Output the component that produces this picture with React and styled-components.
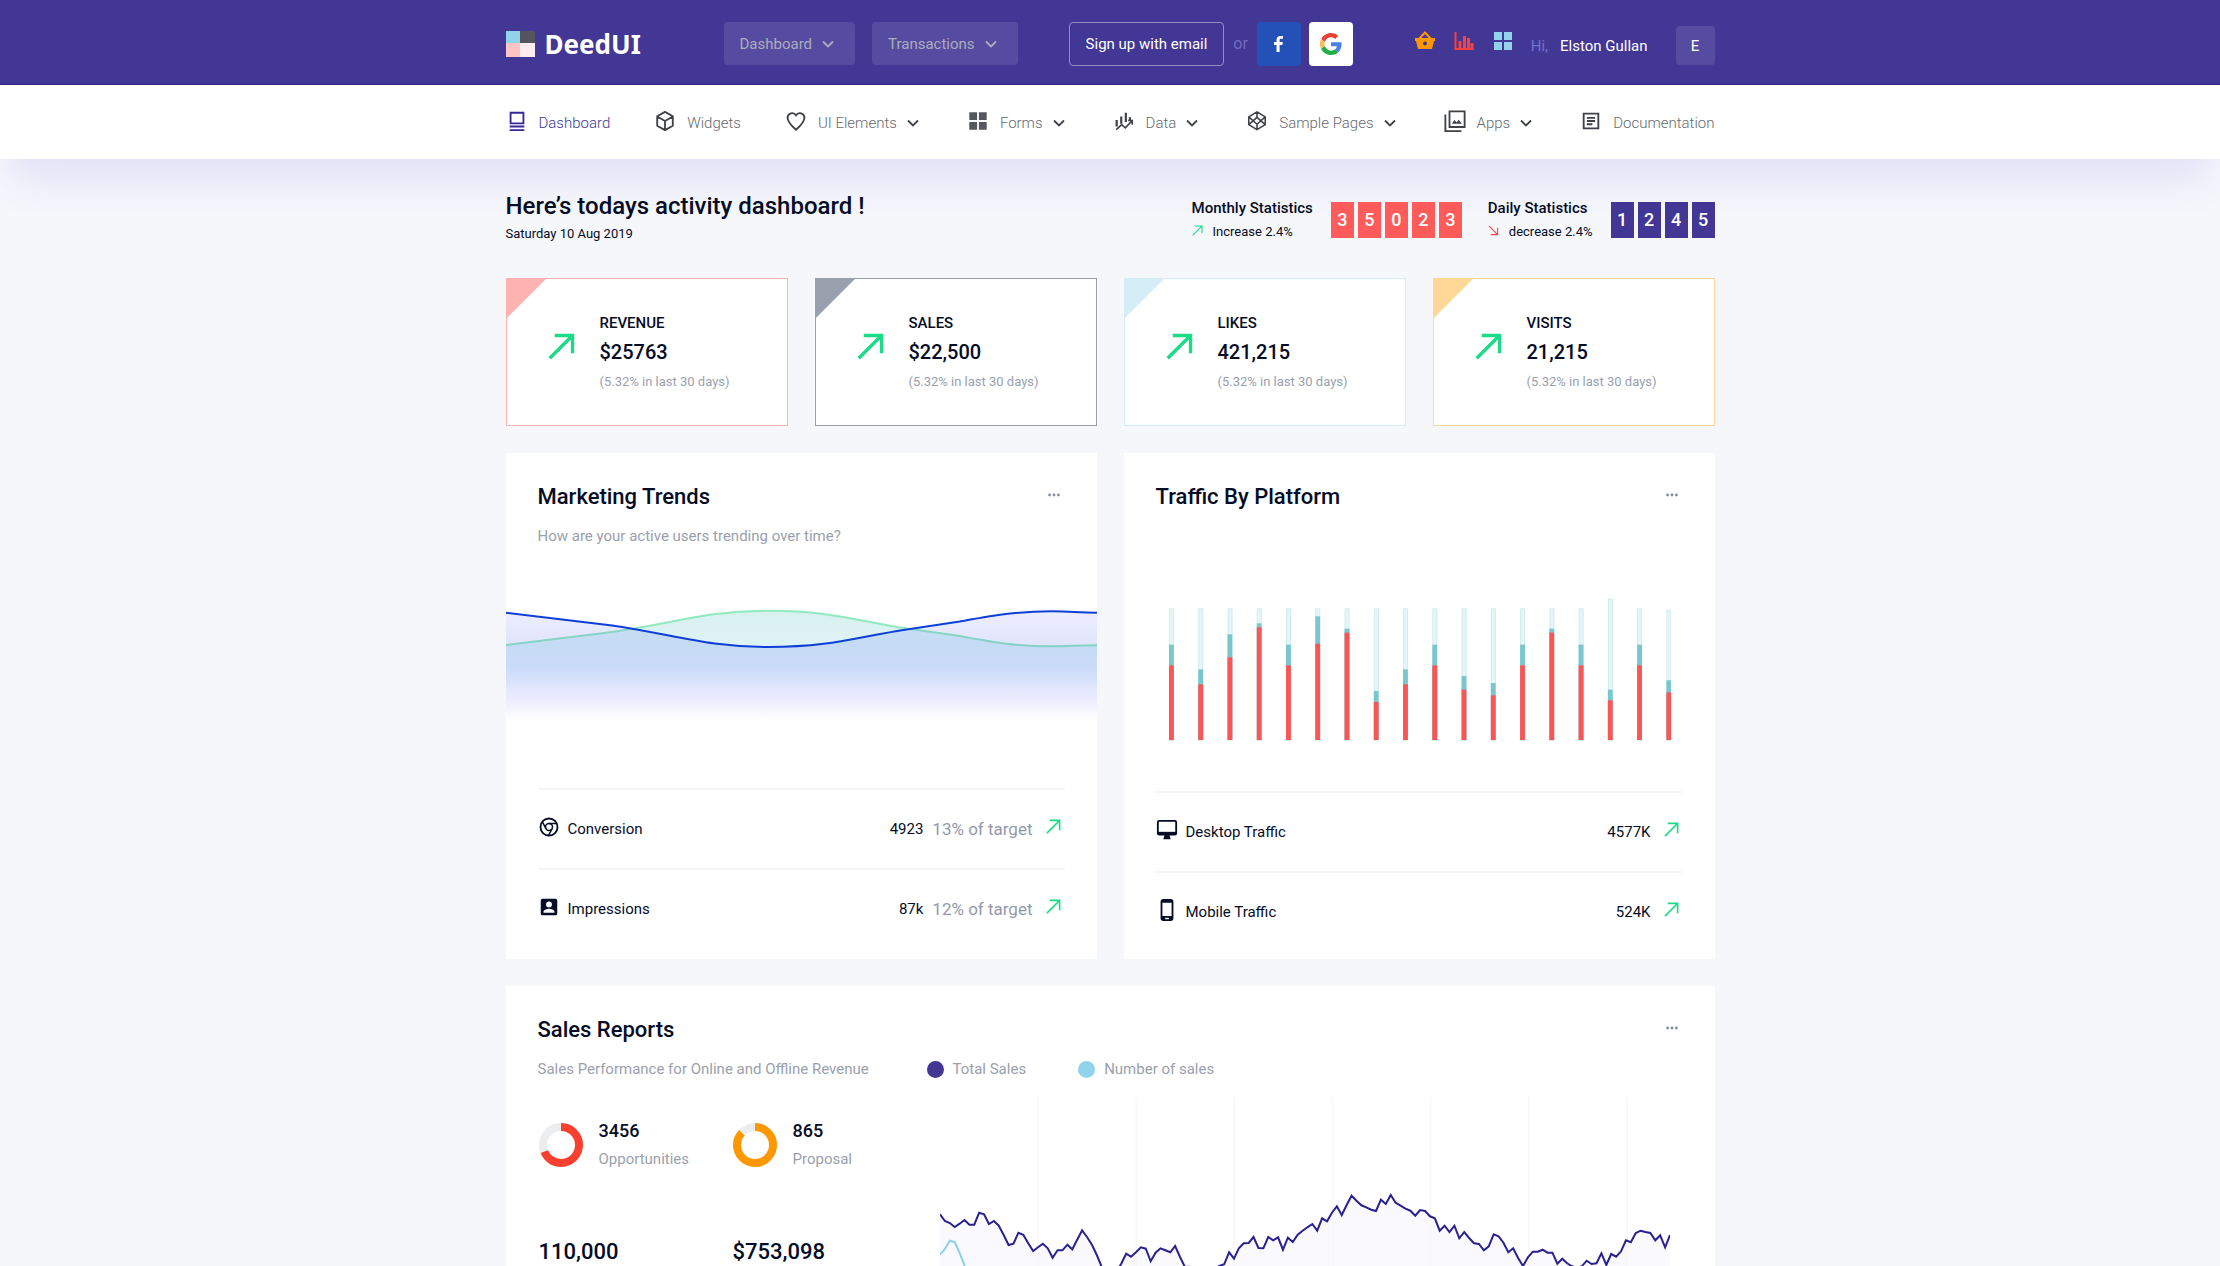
import React from "react";
import styled, { createGlobalStyle } from "styled-components";

const GlobalStyle = createGlobalStyle`
  * { box-sizing: border-box; }
  html { scrollbar-width: none; }
  body {
    margin: 0;
    background: #f6f7fb;
    color: #050c26;
    font-family: Roboto, "Liberation Sans", sans-serif;
    font-size: 15px;
    line-height: 24px;
  }
  h1, h2, p, dl, dd, dt { margin: 0; }
  svg { display: block; flex: none; }
  a { color: inherit; text-decoration: none; }
  button { font: inherit; cursor: pointer; }
`;

const Page = styled.div`
  height: 100vh;
  overflow-y: auto;
  overflow-x: hidden;
  scrollbar-width: none;
`;

const Container = styled.div`
  width: 100%;
  max-width: 1209px;
  margin: 0 auto;
`;

/* ---------- header ---------- */

const Header = styled.header`
  background: #423795;
  border-bottom: 1px solid #2f2387;
`;

const HeaderRow = styled(Container)`
  display: flex;
  align-items: center;
  height: 84px;
  padding-top: 3px;
`;

const Logo = styled.a`
  display: flex;
  align-items: center;
  gap: 10px;
  width: 218px;
  color: #fff;
  font: 700 26px/36px "Noto Sans", sans-serif;
`;

const Group = styled.div`
  display: flex;
  align-items: center;
  gap: ${(p) => p.$gap}px;
  margin-left: ${(p) => p.$push || "0"};
`;

const MenuButton = styled.button`
  display: flex;
  align-items: center;
  gap: 6px;
  height: 43px;
  padding: 0 17px 0 16px;
  border: 0;
  border-radius: 4px;
  background: #554ba0;
  color: #abadbc;
`;

const OutlineButton = styled.button`
  height: 44px;
  padding: 0 16px;
  border: 1px solid #938bc4;
  border-radius: 4px;
  background: transparent;
  color: #fff;
`;

const Or = styled.span`
  padding: 0 9px;
  color: #7269bb;
  font-size: 16px;
`;

const SocialButton = styled.button`
  display: grid;
  place-items: center;
  width: 44px;
  height: 44px;
  margin-right: 8px;
  padding: 0;
  border: 0;
  border-radius: 4px;
  background: ${(p) => p.$bg};
`;

const IconButton = styled.button`
  display: grid;
  place-items: center;
  width: 22px;
  height: 22px;
  margin-bottom: 5px;
  padding: 0;
  border: 0;
  background: none;
`;

const Greeting = styled.p`
  display: flex;
  gap: 12px;
  padding: 4px 11px 0 0;
  color: #fff;
  span { color: #7471cb; }
`;

const Avatar = styled.button`
  width: 39px;
  height: 39px;
  margin-top: 4px;
  padding: 0;
  border: 0;
  border-radius: 4px;
  background: #554ba0;
  color: #fff;
`;

const Nav = styled.nav`
  background: #fff;
  box-shadow: 0 30px 40px -10px rgba(90, 90, 220, 0.14);
`;

const NavList = styled(Container)`
  display: flex;
  justify-content: space-between;
  align-items: center;
  height: 74px;
  padding-top: 2px;
`;

const NavLink = styled.a`
  display: flex;
  align-items: center;
  gap: 11px;
  color: ${(p) => (p.$active ? "#423795" : "#666a70")};
  font-weight: 300;
  > svg { margin-bottom: 5px; }
`;

const NavLabel = styled.span`
  display: flex;
  align-items: center;
  gap: 6px;
`;

/* ---------- heading ---------- */

const Main = styled(Container).attrs({ as: "main" })`
  display: flex;
  flex-direction: column;
  gap: 27px;
  padding: 31px 0 27px;
`;

const Hero = styled.section`
  display: flex;
  justify-content: space-between;
  align-items: flex-end;
  padding-bottom: 5px;
`;

const HeroTitle = styled.h1`
  font-size: 24px;
  line-height: 32px;
  font-weight: 500;
`;

const Statistics = styled(Group)`
  padding-bottom: 2px;
`;

const Small = styled.p`
  font-size: 13px;
`;

const Statistic = styled.div`
  display: flex;
  align-items: center;
  gap: 18px;
`;

const StatisticTitle = styled.p`
  font-weight: 500;
`;

const Change = styled(Small)`
  display: flex;
  gap: 10px;
  svg { margin-top: 5px; }
`;

const Digits = styled.div`
  display: flex;
  gap: 4px;
`;

const Digit = styled.span`
  width: 23px;
  height: 36px;
  background: ${(p) => p.$bg};
  color: #fff;
  font-size: 18px;
  line-height: 36px;
  font-weight: 500;
  text-align: center;
`;

/* ---------- metric cards ---------- */

const Cards = styled.section`
  display: grid;
  grid-template-columns: repeat(4, 1fr);
  gap: 27px;
`;

const Card = styled.article`
  display: flex;
  gap: 25px;
  padding: 30px 20px 29px 41px;
  border: 1px solid ${(p) => p.$tint};
  background: linear-gradient(135deg, ${(p) => p.$tint} 27px, #fff 28px);
  > svg { margin-top: 24px; }
`;

const CardText = styled.div`
  line-height: 29px;
`;

const CardLabel = styled.p`
  font-weight: 500;
`;

const CardValue = styled.p`
  font-size: 20px;
  font-weight: 500;
`;

const CardNote = styled.p`
  font-size: 13px;
  color: #9a9fb0;
`;

/* ---------- panels ---------- */

const Panels = styled.section`
  display: grid;
  grid-template-columns: repeat(2, 1fr);
  gap: 27px;
`;

const Panel = styled.section`
  padding-top: 30px;
  background: #fff;
`;

const PanelHead = styled.div`
  display: flex;
  justify-content: space-between;
  padding: 0 32px;
`;

const PanelTitle = styled.h2`
  font-size: 22px;
  line-height: 28px;
  font-weight: 500;
`;

const MoreButton = styled.button`
  display: grid;
  place-items: center;
  width: 22px;
  height: 24px;
  padding: 0;
  border: 0;
  background: none;
`;

const Muted = styled.p`
  line-height: 22px;
  color: #9a9fac;
`;

const PanelSub = styled(Muted)`
  padding: 14px 32px 0;
`;

const Wave = styled.svg`
  width: 100%;
  height: 160px;
  margin: 50px 0 31px;
`;

const BarsBox = styled.div`
  padding: 80px 44px 50px;
  svg { width: 100%; height: 150px; }
`;

const Rows = styled.dl`
  padding: 0 32px ${(p) => p.$bottom}px;
`;

const Row = styled.div`
  display: flex;
  justify-content: space-between;
  align-items: center;
  height: 80px;
  padding-right: 4px;
  border-top: 2px solid #f5f5f7;
`;

const RowLabel = styled.dt`
  display: flex;
  align-items: center;
  gap: 8px;
  svg { margin-bottom: 5px; }
`;

const RowValue = styled.dd`
  display: flex;
  align-items: center;
  gap: 9px;
  svg { margin: 0 0 6px 4px; }
`;

const Target = styled.span`
  color: #9399ac;
  font-size: 17px;
`;

/* ---------- sales report ---------- */

const SalesSub = styled.div`
  display: flex;
  padding: 14px 32px 0;
  gap: 52px;
`;

const SalesNote = styled(Muted)`
  min-width: 337px;
`;

const Legend = styled(Muted)`
  display: flex;
  align-items: center;
  gap: 9px;
  &::before {
    content: "";
    width: 17px;
    height: 17px;
    border-radius: 50%;
    background: ${(p) => p.$color};
  }
`;

const SalesBody = styled.div`
  display: flex;
  padding: 17px 45px 32px 33px;
`;

const Totals = styled.div`
  display: grid;
  flex: none;
  grid-template-columns: 194px 207px;
  align-content: start;
  row-gap: 64px;
  padding-top: 19px;
`;

const Ring = styled.div`
  display: flex;
  align-items: center;
  gap: 16px;
`;

const RingValue = styled.p`
  font-size: 18px;
  line-height: 29px;
  font-weight: 500;
`;

const RingLabel = styled(Muted)`
  line-height: 29px;
`;

const Total = styled.p`
  font-size: 22px;
  line-height: 28px;
  font-weight: 500;
`;

const LineChart = styled.svg`
  flex: 1 1 0;
  min-width: 0;
  height: 320px;
`;

/* ---------- icons ---------- */

const Svg = ({ size = 22, children, stroke = "#3f4248", width = 2 }) => (
  <svg width={size} height={size} viewBox="0 0 24 24" fill="none" stroke={stroke} strokeWidth={width} aria-hidden="true">
    {children}
  </svg>
);

const Chevron = ({ color = "#3f4248" }) => (
  <Svg size={20} stroke={color} width={2.2}>
    <path d="M6 9l6 6 6-6" />
  </Svg>
);

const Arrow = ({ size, down, width = 2 }) => (
  <svg width={size} height={size} viewBox="0 0 24 24" fill="none" stroke={down ? "#fb4545" : "#1bdb87"} strokeWidth={width} aria-hidden="true">
    {down ? <path d="M2 2l19 19M21 6v15H6" /> : <path d="M1.500 22.500L22 2M6 2.200h15.800V18" />}
  </svg>
);

const Dots = () => (
  <MoreButton aria-label="More options">
    <svg width="12" height="4" viewBox="0 0 12 4" fill="#858b9c">
      <circle cx="1.600" cy="2" r="1.400" />
      <circle cx="6" cy="2" r="1.400" />
      <circle cx="10.400" cy="2" r="1.400" />
    </svg>
  </MoreButton>
);

const icons = {
  dashboard: (
    <Svg stroke="#35299a">
      <path d="M5 3h14v11.500H5zM4 18h16M4 22h16" />
    </Svg>
  ),
  box: (
    <Svg>
      <path d="M12 2l8.500 4.800v10.400L12 22l-8.500-4.800V6.800zM3.500 7L12 12l8.500-5M12 12v10" strokeLinejoin="round" />
    </Svg>
  ),
  heart: (
    <Svg>
      <path d="M12 21.500C5 15.500 2.800 12.200 2.800 8.500A5 5 0 0 1 12 5.800a5 5 0 0 1 9.200 2.700C21.200 12.200 19 15.500 12 21.500z" />
    </Svg>
  ),
  grid: (
    <Svg>
      <path d="M2.500 2.500h8.500v8.500H2.500zM13 2.500h8.500v8.500H13zM2.500 13h8.500v8.500H2.500zM13 13h8.500v8.500H13z" fill="#55585e" stroke="none" />
    </Svg>
  ),
  data: (
    <Svg>
      <path d="M4 11v7M9 7v8M14 3v10M18.500 8v3" strokeWidth="2.400" />
      <path d="M3.500 21.500l6-5.500 4 3.500 7-7.500M16.500 11.500h4.500v4.500" strokeWidth="1.800" />
    </Svg>
  ),
  codepen: (
    <Svg>
      <path d="M12 2l9 5.500v8.500L12 21.500 3 16V7.500zM12 2v6M12 15.500v6M3 7.500l9 8 9-8M3 16l9-8 9 8" strokeWidth="1.700" strokeLinejoin="round" />
    </Svg>
  ),
  images: (
    <Svg>
      <path d="M6 1.500h16.500v17H6zM1.500 5v18H19" />
      <path d="M8.500 15l3-4 2.300 2.500 2.200-3 3.500 4.500z" fill="#3f4248" stroke="none" />
    </Svg>
  ),
  article: (
    <Svg>
      <path d="M4 4h16v16H4zM7.500 8.500h9M7.500 12h9M7.500 15.500h6" />
    </Svg>
  ),
  chrome: (
    <Svg stroke="#050c26">
      <circle cx="12" cy="12" r="9.300" />
      <circle cx="12" cy="12" r="3.800" strokeWidth="1.600" />
      <path d="M4.800 6.500l4 7.500M12 8.200h8.200M15.400 14L11.500 21" strokeWidth="1.600" />
    </Svg>
  ),
  person: (
    <Svg>
      <path fillRule="evenodd" stroke="none" fill="#050c26" d="M5 3h14a2 2 0 0 1 2 2v14a2 2 0 0 1-2 2H5a2 2 0 0 1-2-2V5a2 2 0 0 1 2-2zM12 6a3.200 3.200 0 1 0 0 6.400A3.200 3.200 0 0 0 12 6zM6 18.300h12v-1c0-2.200-4-3.300-6-3.300s-6 1.100-6 3.300z" />
    </Svg>
  ),
  desktop: (
    <Svg stroke="#050c26">
      <rect x="2" y="2" width="20" height="15" rx="1.500" />
      <path d="M2 15.500h20" strokeWidth="3" />
      <path d="M9.500 17h5l1.500 5H8z" fill="#050c26" stroke="none" />
    </Svg>
  ),
  mobile: (
    <Svg>
      <path fillRule="evenodd" stroke="none" fill="#050c26" d="M8 0h8a3 3 0 0 1 3 3v18a3 3 0 0 1-3 3H8a3 3 0 0 1-3-3V3a3 3 0 0 1 3-3zM7 4v14.500h10V4zM10 20.500V22h4v-1.500z" />
    </Svg>
  ),
};

/* ---------- data ---------- */

const navItems = [
  { label: "Dashboard", icon: "dashboard", active: true },
  { label: "Widgets", icon: "box" },
  { label: "UI Elements", icon: "heart", menu: true },
  { label: "Forms", icon: "grid", menu: true },
  { label: "Data", icon: "data", menu: true },
  { label: "Sample Pages", icon: "codepen", menu: true },
  { label: "Apps", icon: "images", menu: true },
  { label: "Documentation", icon: "article" },
];

const cards = [
  { label: "REVENUE", value: "$25763", tint: "#ffb3b1" },
  { label: "SALES", value: "$22,500", tint: "#9aa1ae" },
  { label: "LIKES", value: "421,215", tint: "#d5edf7" },
  { label: "VISITS", value: "21,215", tint: "#ffd898" },
];

/* [height, end of second segment, end of first segment], in thirds of a pixel */
const bars = [
  [395, 286, 224], [395, 212, 167], [395, 317, 248], [395, 350, 338],
  [395, 286, 224], [395, 371, 289], [395, 334, 322], [395, 147, 114],
  [395, 212, 167], [395, 286, 224], [395, 192, 151], [395, 171, 134],
  [395, 286, 224], [395, 334, 322], [395, 286, 224], [424, 151, 119],
  [395, 286, 224], [391, 179, 143],
];

const totalSales = [
  402, 422, 428, 440, 430, 419, 433, 433, 397, 402, 431, 422, 436, 464, 494, 490, 457, 463, 489, 512,
  501, 490, 504, 532, 510, 510, 493, 507, 478, 450, 470, 493, 524, 560, 600, 600, 575, 550, 520, 529,
  516, 501, 505, 543, 517, 504, 510, 516, 497, 530, 560, 559, 580, 585, 580, 575, 565, 557, 552, 516,
  535, 504, 489, 488, 470, 503, 504, 470, 480, 471, 508, 472, 485, 463, 451, 441, 431, 451, 414, 423,
  397, 378, 404, 374, 346, 361, 375, 381, 388, 392, 358, 371, 344, 367, 376, 385, 391, 406, 389, 392,
  408, 414, 451, 436, 455, 436, 474, 455, 473, 489, 491, 510, 498, 462, 468, 487, 516, 504, 533, 557,
  531, 514, 514, 508, 517, 517, 550, 535, 549, 558, 562, 558, 541, 551, 549, 519, 554, 521, 529, 513,
  480, 486, 458, 451, 455, 458, 480, 465, 501, 464,
];
const salesCount = [523, 506, 481, 485, 518, 556, 590, 620, 640, 630, 650, 670, 660, 680];

const toPoints = (list) =>
  list.map((y, i) => `${((i * 729) / 149).toFixed(1)},${((y - 50) / 3).toFixed(1)}`).join(" ");

const blueLine = "M0 15.700L106 28.500C170 38 200 50 262 50C325 50 350 40 400 32.500L453 24.500C490 18 510 14.300 545 14.300C565 14.300 570 15.700 590 15.700";
const greenLine = "M0 48L106 35C170 26 200 13.700 262 13.700C325 13.700 350 24 400 31.500L453 39C490 46 510 49.300 545 49.300C565 49.300 570 48.300 590 48.300";

const Donut = ({ color, share }) => (
  <svg width="44" height="44" viewBox="0 0 44 44" fill="none" strokeWidth="8" aria-hidden="true">
    <circle cx="22" cy="22" r="18" stroke="#ebedef" />
    <circle cx="22" cy="22" r="18" stroke={color} pathLength="100" strokeDasharray={`${share} 100`} transform="rotate(-90 22 22)" />
  </svg>
);

const Stat = ({ title, change, down, digits, bg }) => (
  <Statistic>
    <div>
      <StatisticTitle>{title}</StatisticTitle>
      <Change>
        <Arrow size={11} down={down} width={2.4} />
        {change}
      </Change>
    </div>
    <Digits>
      {digits.split("").map((d, i) => (
        <Digit key={i} $bg={bg}>{d}</Digit>
      ))}
    </Digits>
  </Statistic>
);

export default function App() {
  return (
    <Page>
      <GlobalStyle />
      <Header>
        <HeaderRow>
          <Logo href="#">
            <svg width="29" height="26" viewBox="0 0 29 26" aria-hidden="true">
              <path d="M0 0h14v12H0z" fill="#92d3ec" />
              <path d="M14 0h15v12H14z" fill="#55545f" />
              <path d="M0 12h14v14H0z" fill="#ffc4c3" />
              <path d="M14 12h15v14H14z" fill="#ffecef" />
            </svg>
            DeedUI
          </Logo>
          <Group $gap={17}>
            <MenuButton>Dashboard <Chevron color="#abadbc" /></MenuButton>
            <MenuButton>Transactions <Chevron color="#abadbc" /></MenuButton>
          </Group>
          <Group $gap={0} $push="51px">
            <OutlineButton>Sign up with email</OutlineButton>
            <Or>or</Or>
            <SocialButton $bg="#2451b7" aria-label="Facebook">
              <svg width="9" height="16" viewBox="0 0 9 16" fill="#fff">
                <path d="M2.500 16V9H0V6h2.500V4C2.500 1.500 4 0 6.200 0H9v2.800H7C6 2.800 5.600 3.300 5.600 4.200V6H8.800l-.4 3H5.600v7z" />
              </svg>
            </SocialButton>
            <SocialButton $bg="#fff" aria-label="Google">
              <svg width="22" height="22" viewBox="0 0 48 48">
                <path fill="#ea4335" d="M24 9.500c3.500 0 6.700 1.200 9.200 3.600l6.900-6.900C35.900 2.400 30.500 0 24 0 14.600 0 6.500 5.400 2.600 13.200l8 6.200C12.400 13.700 17.700 9.500 24 9.500z" />
                <path fill="#4a80e8" d="M47 24.600c0-1.600-.2-3.100-.4-4.600H24v9h12.900c-.6 3-2.200 5.500-4.700 7.200l7.700 6C44.400 38 47 32 47 24.600z" />
                <path fill="#fbbc5a" d="M10.500 28.600a14.500 14.500 0 0 1 0-9.200l-8-6.200a24 24 0 0 0 0 21.600z" />
                <path fill="#22ad45" d="M24 48c6.500 0 11.900-2.100 15.900-5.800l-7.700-6c-2.200 1.500-4.900 2.300-8.200 2.300-6.300 0-11.600-4.200-13.500-9.900l-8 6.200C6.500 42.600 14.600 48 24 48z" />
              </svg>
            </SocialButton>
          </Group>
          <Group $gap={17} $push="auto">
            <IconButton aria-label="Basket">
              <svg width="22" height="20" viewBox="0 0 22 20">
                <path d="M5 8l6-6.500L17 8" fill="none" stroke="#ff9800" strokeWidth="2" />
                <path fillRule="evenodd" fill="#ff9800" d="M1 7h20v3h-1l-2 8H4L2 10H1zM11 10.500a2 2 0 1 0 0 4 2 2 0 0 0 0-4z" />
              </svg>
            </IconButton>
            <IconButton aria-label="Reports">
              <svg width="20" height="18" viewBox="0 0 20 18" fill="none" stroke="#f9403a">
                <path d="M1.500 0v17H20" strokeWidth="2" />
                <path d="M6 17V9M10.500 17V4M14.500 17V6M18 17v-6" strokeWidth="3" />
              </svg>
            </IconButton>
            <IconButton aria-label="Apps">
              <svg width="18" height="18" viewBox="0 0 18 18" fill="#92d3ec">
                <path d="M0 0h8v8H0zM10 0h8v8h-8zM0 10h8v8H0zM10 10h8v8h-8z" />
              </svg>
            </IconButton>
            <Greeting><span>Hi,</span>Elston Gullan</Greeting>
            <Avatar>E</Avatar>
          </Group>
        </HeaderRow>
      </Header>

      <Nav>
        <NavList>
          {navItems.map((item) => (
            <NavLink key={item.label} href="#" $active={item.active}>
              {icons[item.icon]}
              <NavLabel>
                {item.label}
                {item.menu && <Chevron />}
              </NavLabel>
            </NavLink>
          ))}
        </NavList>
      </Nav>

      <Main>
        <Hero>
          <div>
            <HeroTitle>Here’s todays activity dashboard !</HeroTitle>
            <Small>Saturday 10 Aug 2019</Small>
          </div>
          <Statistics $gap={26}>
            <Stat title="Monthly Statistics" change="Increase 2.4%" digits="35023" bg="#ff5b5b" />
            <Stat title="Daily Statistics" change="decrease 2.4%" digits="1245" bg="#423795" down />
          </Statistics>
        </Hero>

        <Cards>
          {cards.map((c) => (
            <Card key={c.label} $tint={c.tint}>
              <Arrow size={27} width={3} />
              <CardText>
                <CardLabel>{c.label}</CardLabel>
                <CardValue>{c.value}</CardValue>
                <CardNote>(5.32% in last 30 days)</CardNote>
              </CardText>
            </Card>
          ))}
        </Cards>

        <Panels>
          <Panel>
            <PanelHead>
              <PanelTitle>Marketing Trends</PanelTitle>
              <Dots />
            </PanelHead>
            <PanelSub>How are your active users trending over time?</PanelSub>
            <Wave viewBox="0 0 590 160" preserveAspectRatio="none" role="img" aria-label="Active users over time">
              <defs>
                <linearGradient id="greenFill" gradientUnits="userSpaceOnUse" x1="0" y1="14" x2="0" y2="110">
                  <stop offset="0" stopColor="#d8f1ee" />
                  <stop offset="0.350" stopColor="#def3f6" />
                  <stop offset="0.600" stopColor="#e6f3fb" />
                  <stop offset="1" stopColor="#fff" stopOpacity="0" />
                </linearGradient>
                <linearGradient id="blueFill" gradientUnits="userSpaceOnUse" x1="0" y1="14" x2="0" y2="124">
                  <stop offset="0" stopColor="#5a5cf0" stopOpacity="0.110" />
                  <stop offset="0.300" stopColor="#4a68f0" stopOpacity="0.170" />
                  <stop offset="0.600" stopColor="#5a78f5" stopOpacity="0.190" />
                  <stop offset="0.800" stopColor="#6a70f5" stopOpacity="0.130" />
                  <stop offset="1" stopColor="#7a70f5" stopOpacity="0" />
                </linearGradient>
              </defs>
              <path d={`${greenLine}V160H0z`} fill="url(#greenFill)" />
              <path d={greenLine} fill="none" stroke="#91e9bf" strokeWidth="2" />
              <path d={`${blueLine}V160H0z`} fill="url(#blueFill)" />
              <path d={blueLine} fill="none" stroke="#0d3fd6" strokeWidth="2" />
            </Wave>
            <Rows $bottom={11}>
              <Row>
                <RowLabel>{icons.chrome}Conversion</RowLabel>
                <RowValue>4923 <Target>13% of target</Target><Arrow size={15} width={2.600} /></RowValue>
              </Row>
              <Row>
                <RowLabel>{icons.person}Impressions</RowLabel>
                <RowValue>87k <Target>12% of target</Target><Arrow size={15} width={2.600} /></RowValue>
              </Row>
            </Rows>
          </Panel>

          <Panel>
            <PanelHead>
              <PanelTitle>Traffic By Platform</PanelTitle>
              <Dots />
            </PanelHead>
            <BarsBox>
              <svg viewBox="0 0 502 150" preserveAspectRatio="none" role="img" aria-label="Traffic by platform">
                {bars.map(([top, mid, low], i) => {
                  const x = 1 + i * 29.2;
                  return (
                    <g key={i}>
                      <rect x={x + 0.5} y={149.5 - top / 3} width="4" height={top / 3} fill="#e4f6f7" stroke="#cfecef" />
                      <rect x={x} y={149 - mid / 3} width="4.800" height={mid / 3} fill="#7ac6cf" />
                      <rect x={x} y={149 - low / 3} width="4.800" height={low / 3} fill="#fc5654" />
                    </g>
                  );
                })}
              </svg>
            </BarsBox>
            <Rows $bottom={8}>
              <Row>
                <RowLabel>{icons.desktop}Desktop Traffic</RowLabel>
                <RowValue>4577K <Arrow size={15} width={2.600} /></RowValue>
              </Row>
              <Row>
                <RowLabel>{icons.mobile}Mobile Traffic</RowLabel>
                <RowValue>524K <Arrow size={15} width={2.600} /></RowValue>
              </Row>
            </Rows>
          </Panel>
        </Panels>

        <Panel>
          <PanelHead>
            <PanelTitle>Sales Reports</PanelTitle>
            <Dots />
          </PanelHead>
          <SalesSub>
            <SalesNote>Sales Performance for Online and Offline Revenue</SalesNote>
            <Legend $color="#423795">Total Sales</Legend>
            <Legend $color="#92d3ec">Number of sales</Legend>
          </SalesSub>
          <SalesBody>
            <Totals>
              <Ring>
                <Donut color="#f9402f" share={69} />
                <div>
                  <RingValue>3456</RingValue>
                  <RingLabel>Opportunities</RingLabel>
                </div>
              </Ring>
              <Ring>
                <Donut color="#ff9800" share={87} />
                <div>
                  <RingValue>865</RingValue>
                  <RingLabel>Proposal</RingLabel>
                </div>
              </Ring>
              <Total>110,000</Total>
              <Total>$753,098</Total>
            </Totals>
            <LineChart viewBox="0 0 729 320" preserveAspectRatio="none" role="img" aria-label="Total sales and number of sales">
              <polygon points={`0,320 ${toPoints(totalSales)} 729,320`} fill="#faf9fe" />
              {[1, 2, 3, 4, 5, 6, 7].map((i) => (
                <path key={i} d={`M${i * 98} 0V320`} stroke="#f7f7f9" strokeWidth="1.500" />
              ))}
              <polyline points={toPoints(salesCount)} fill="none" stroke="#8bd0e6" strokeWidth="2" />
              <polyline points={toPoints(totalSales)} fill="none" stroke="#2a2191" strokeWidth="2" />
            </LineChart>
          </SalesBody>
        </Panel>
      </Main>
    </Page>
  );
}
